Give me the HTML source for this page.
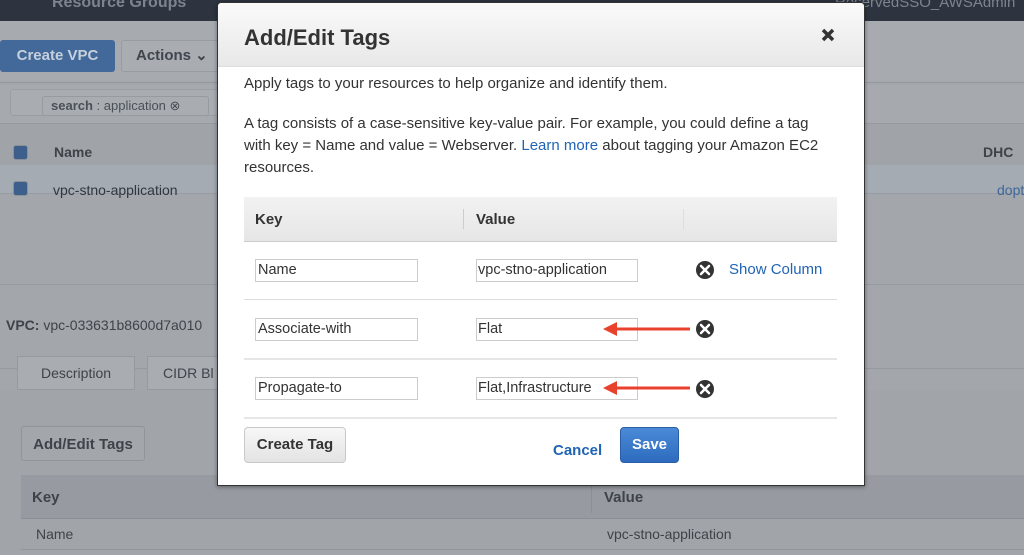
<!DOCTYPE html>
<html><head><meta charset="utf-8"><style>
*{box-sizing:border-box;margin:0;padding:0}
body{width:1024px;height:555px;overflow:hidden;position:relative;background:#a3a7ac;font-family:"Liberation Sans",Arial,sans-serif;color:#333}
.a{position:absolute}
.t{white-space:nowrap}
</style></head><body>
<div class="a" style="left:0;top:0;width:1024px;height:21px;background:#2d3440"></div>
<div class="a t" style="left:52px;top:-6px;font-size:16px;font-weight:bold;color:#7d848d">Resource Groups</div>
<div class="a t" style="left:835px;top:-6px;font-size:15px;color:#7d848d">ReservedSSO_AWSAdmin</div>
<div class="a" style="left:0;top:21px;width:1024px;height:60px;background:#a7abb0"></div>
<div class="a t" style="left:0;top:40px;width:115px;height:32px;background:#42699a;border-radius:3px;color:#c6d0dc;font-weight:bold;font-size:15px;line-height:32px;text-align:center">Create VPC</div>
<div class="a t" style="left:121px;top:40px;width:100px;height:32px;background:#a9adb2;border:1px solid #989ca1;border-radius:3px;color:#3f454c;font-weight:bold;font-size:15px;line-height:30px;padding-left:14px">Actions ⌄</div>
<div class="a" style="left:0;top:82px;width:1024px;height:1px;background:#959a9f"></div>
<div class="a" style="left:0;top:85px;width:1024px;height:38px;background:#a6aaaf"></div>
<div class="a" style="left:10px;top:89px;width:220px;height:27px;background:#a9adb2;border:1px solid #9a9ea3;border-radius:3px"></div>
<div class="a t" style="left:42px;top:96px;width:167px;height:20px;border:1px solid #979ba0;border-radius:3px;font-size:13px;line-height:18px;padding-left:8px;color:#4a5057"><b>search</b> : application ⊗</div>
<div class="a" style="left:0;top:123px;width:1024px;height:42px;background:#a0a4a9;border-top:1px solid #969a9f"></div>
<div class="a" style="left:13px;top:145px;width:15px;height:15px;background:#3d5f8b;border:1px solid #8a9098;border-radius:3px"></div>
<div class="a t" style="left:54px;top:144px;font-size:14px;font-weight:bold;color:#3d4349">Name</div>
<div class="a t" style="left:983px;top:144px;font-size:14px;font-weight:bold;color:#3d4349">DHC</div>
<div class="a" style="left:0;top:165px;width:1024px;height:29px;background:#a4abb3;border-bottom:1px solid #979ca2"></div>
<div class="a" style="left:13px;top:181px;width:15px;height:15px;background:#3d5f8b;border:1px solid #8a9098;border-radius:3px"></div>
<div class="a t" style="left:53px;top:182px;font-size:14px;color:#30363c">vpc-stno-application</div>
<div class="a t" style="left:997px;top:182px;font-size:14px;color:#3e6697">dopt</div>
<div class="a" style="left:0;top:284px;width:1024px;height:1px;background:#959a9f"></div>
<div class="a t" style="left:6px;top:317px;font-size:14px;color:#3d4349"><b>VPC:</b> vpc-033631b8600d7a010</div>
<div class="a" style="left:0;top:368px;width:1024px;height:1px;background:#959a9f"></div>
<div class="a t" style="left:17px;top:356px;width:118px;height:34px;background:#a9adb2;border:1px solid #959a9f;font-size:14px;line-height:33px;text-align:center;color:#3d4349">Description</div>
<div class="a t" style="left:147px;top:356px;width:80px;height:34px;background:#a9adb2;border:1px solid #959a9f;font-size:14px;line-height:33px;padding-left:15px;color:#3d4349">CIDR Bl</div>
<div class="a" style="left:0;top:390px;width:1024px;height:165px;background:#a1a5aa"></div>
<div class="a t" style="left:21px;top:426px;width:124px;height:35px;background:#a3a7ac;border:1px solid #91959a;border-radius:3px;font-size:15px;font-weight:bold;line-height:35px;text-align:center;color:#3d4349">Add/Edit Tags</div>
<div class="a" style="left:21px;top:475px;width:1003px;height:44px;background:#979ba1;border-bottom:1px solid #8a8f95"></div>
<div class="a t" style="left:32px;top:489px;font-size:15px;font-weight:bold;color:#3d4349">Key</div>
<div class="a" style="left:591px;top:478px;width:1px;height:35px;background:#8c9096"></div>
<div class="a t" style="left:604px;top:489px;font-size:15px;font-weight:bold;color:#3d4349">Value</div>
<div class="a" style="left:21px;top:549px;width:1003px;height:1px;background:#92969b"></div>
<div class="a t" style="left:36px;top:526px;font-size:14px;color:#3d4349">Name</div>
<div class="a t" style="left:607px;top:526px;font-size:14px;color:#3d4349">vpc-stno-application</div>

<div class="a" style="left:217px;top:2px;width:648px;height:484px;background:#fff;border:1px solid #333;border-radius:4px 4px 0 0;box-shadow:0 1px 4px rgba(0,0,0,.4)"></div>
<div class="a" style="left:218px;top:3px;width:646px;height:64px;background:linear-gradient(#fafafa,#e8e8e8);border-bottom:1px solid #ddd;border-radius:4px 4px 0 0"></div>
<div class="a t" style="left:244px;top:25px;font-size:22px;font-weight:bold;color:#333">Add/Edit Tags</div>
<svg class="a" style="left:821px;top:28px" width="14" height="14"><path d="M2 2l10 10M12 2L2 12" stroke="#333" stroke-width="3.5"/></svg>
<div class="a t" style="left:244px;top:75px;font-size:15px;color:#333">Apply tags to your resources to help organize and identify them.</div>
<div class="a" style="left:244px;top:113px;width:590px;font-size:15px;line-height:22px;color:#333">A tag consists of a case-sensitive key-value pair. For example, you could define a tag with key = Name and value = Webserver. <span style="color:#1f64b5">Learn more</span> about tagging your Amazon EC2 resources.</div>

<div class="a" style="left:244px;top:197px;width:593px;height:45px;background:linear-gradient(#f2f2f2,#e6e6e6);border-bottom:1px solid #ccc"></div>
<div class="a t" style="left:255px;top:211px;font-size:15px;font-weight:bold;color:#333">Key</div>
<div class="a" style="left:463px;top:209px;width:1px;height:20px;background:#ccc"></div>
<div class="a t" style="left:476px;top:211px;font-size:15px;font-weight:bold;color:#333">Value</div>
<div class="a" style="left:683px;top:209px;width:1px;height:20px;background:#ddd"></div>
<div class="a" style="left:244px;top:299px;width:593px;height:1px;background:#ddd"></div>
<div class="a" style="left:244px;top:358px;width:593px;height:2px;background:#e6e6e6"></div>
<div class="a" style="left:244px;top:417px;width:593px;height:2px;background:#e6e6e6"></div>

<div class="a t" style="left:255px;top:259px;width:163px;height:23px;border:1px solid #ccc;font-size:14.5px;line-height:21px;padding-left:2px">Name</div>
<div class="a t" style="left:476px;top:259px;width:162px;height:23px;border:1px solid #ccc;font-size:14.5px;line-height:21px;padding-left:1px">vpc-stno-application</div>
<div class="a t" style="left:255px;top:318px;width:163px;height:23px;border:1px solid #ccc;font-size:14.5px;line-height:21px;padding-left:2px">Associate-with</div>
<div class="a t" style="left:476px;top:318px;width:162px;height:23px;border:1px solid #ccc;font-size:14.5px;line-height:21px;padding-left:1px">Flat</div>
<div class="a t" style="left:255px;top:377px;width:163px;height:23px;border:1px solid #ccc;font-size:14.5px;line-height:21px;padding-left:2px">Propagate-to</div>
<div class="a t" style="left:476px;top:377px;width:162px;height:23px;border:1px solid #ccc;font-size:14.5px;line-height:21px;padding-left:1px">Flat,Infrastructure</div>

<svg class="a" style="left:0;top:0" width="1024" height="555">
<g fill="#333"><circle cx="705" cy="270" r="9"/><circle cx="705" cy="329" r="9"/><circle cx="705" cy="389" r="9"/></g>
<g stroke="#fff" stroke-width="2.5" stroke-linecap="round">
<path d="M701 266l8 8M709 266l-8 8"/><path d="M701 325l8 8M709 325l-8 8"/><path d="M701 385l8 8M709 385l-8 8"/></g>
<g stroke="#e8412c" stroke-width="3" fill="#e8412c">
<path d="M690 329H612"/><path d="M603 329l14-7v14z" stroke="none"/>
<path d="M690 388H612"/><path d="M603 388l14-7v14z" stroke="none"/></g>
</svg>
<div class="a t" style="left:729px;top:261px;font-size:15px;color:#1f64b5">Show Column</div>

<div class="a t" style="left:244px;top:427px;width:102px;height:36px;background:linear-gradient(#f7f7f7,#e3e3e3);border:1px solid #c8c8c8;border-radius:4px;font-size:15px;font-weight:bold;line-height:34px;text-align:center;color:#333">Create Tag</div>
<div class="a t" style="left:553px;top:442px;font-size:15px;font-weight:bold;color:#1f64b5">Cancel</div>
<div class="a t" style="left:620px;top:427px;width:59px;height:36px;background:linear-gradient(#4a8ad6,#2e6bbf);border:1px solid #2a5fa8;border-radius:4px;font-size:15px;font-weight:bold;line-height:34px;text-align:center;color:#fff">Save</div>
</body></html>
